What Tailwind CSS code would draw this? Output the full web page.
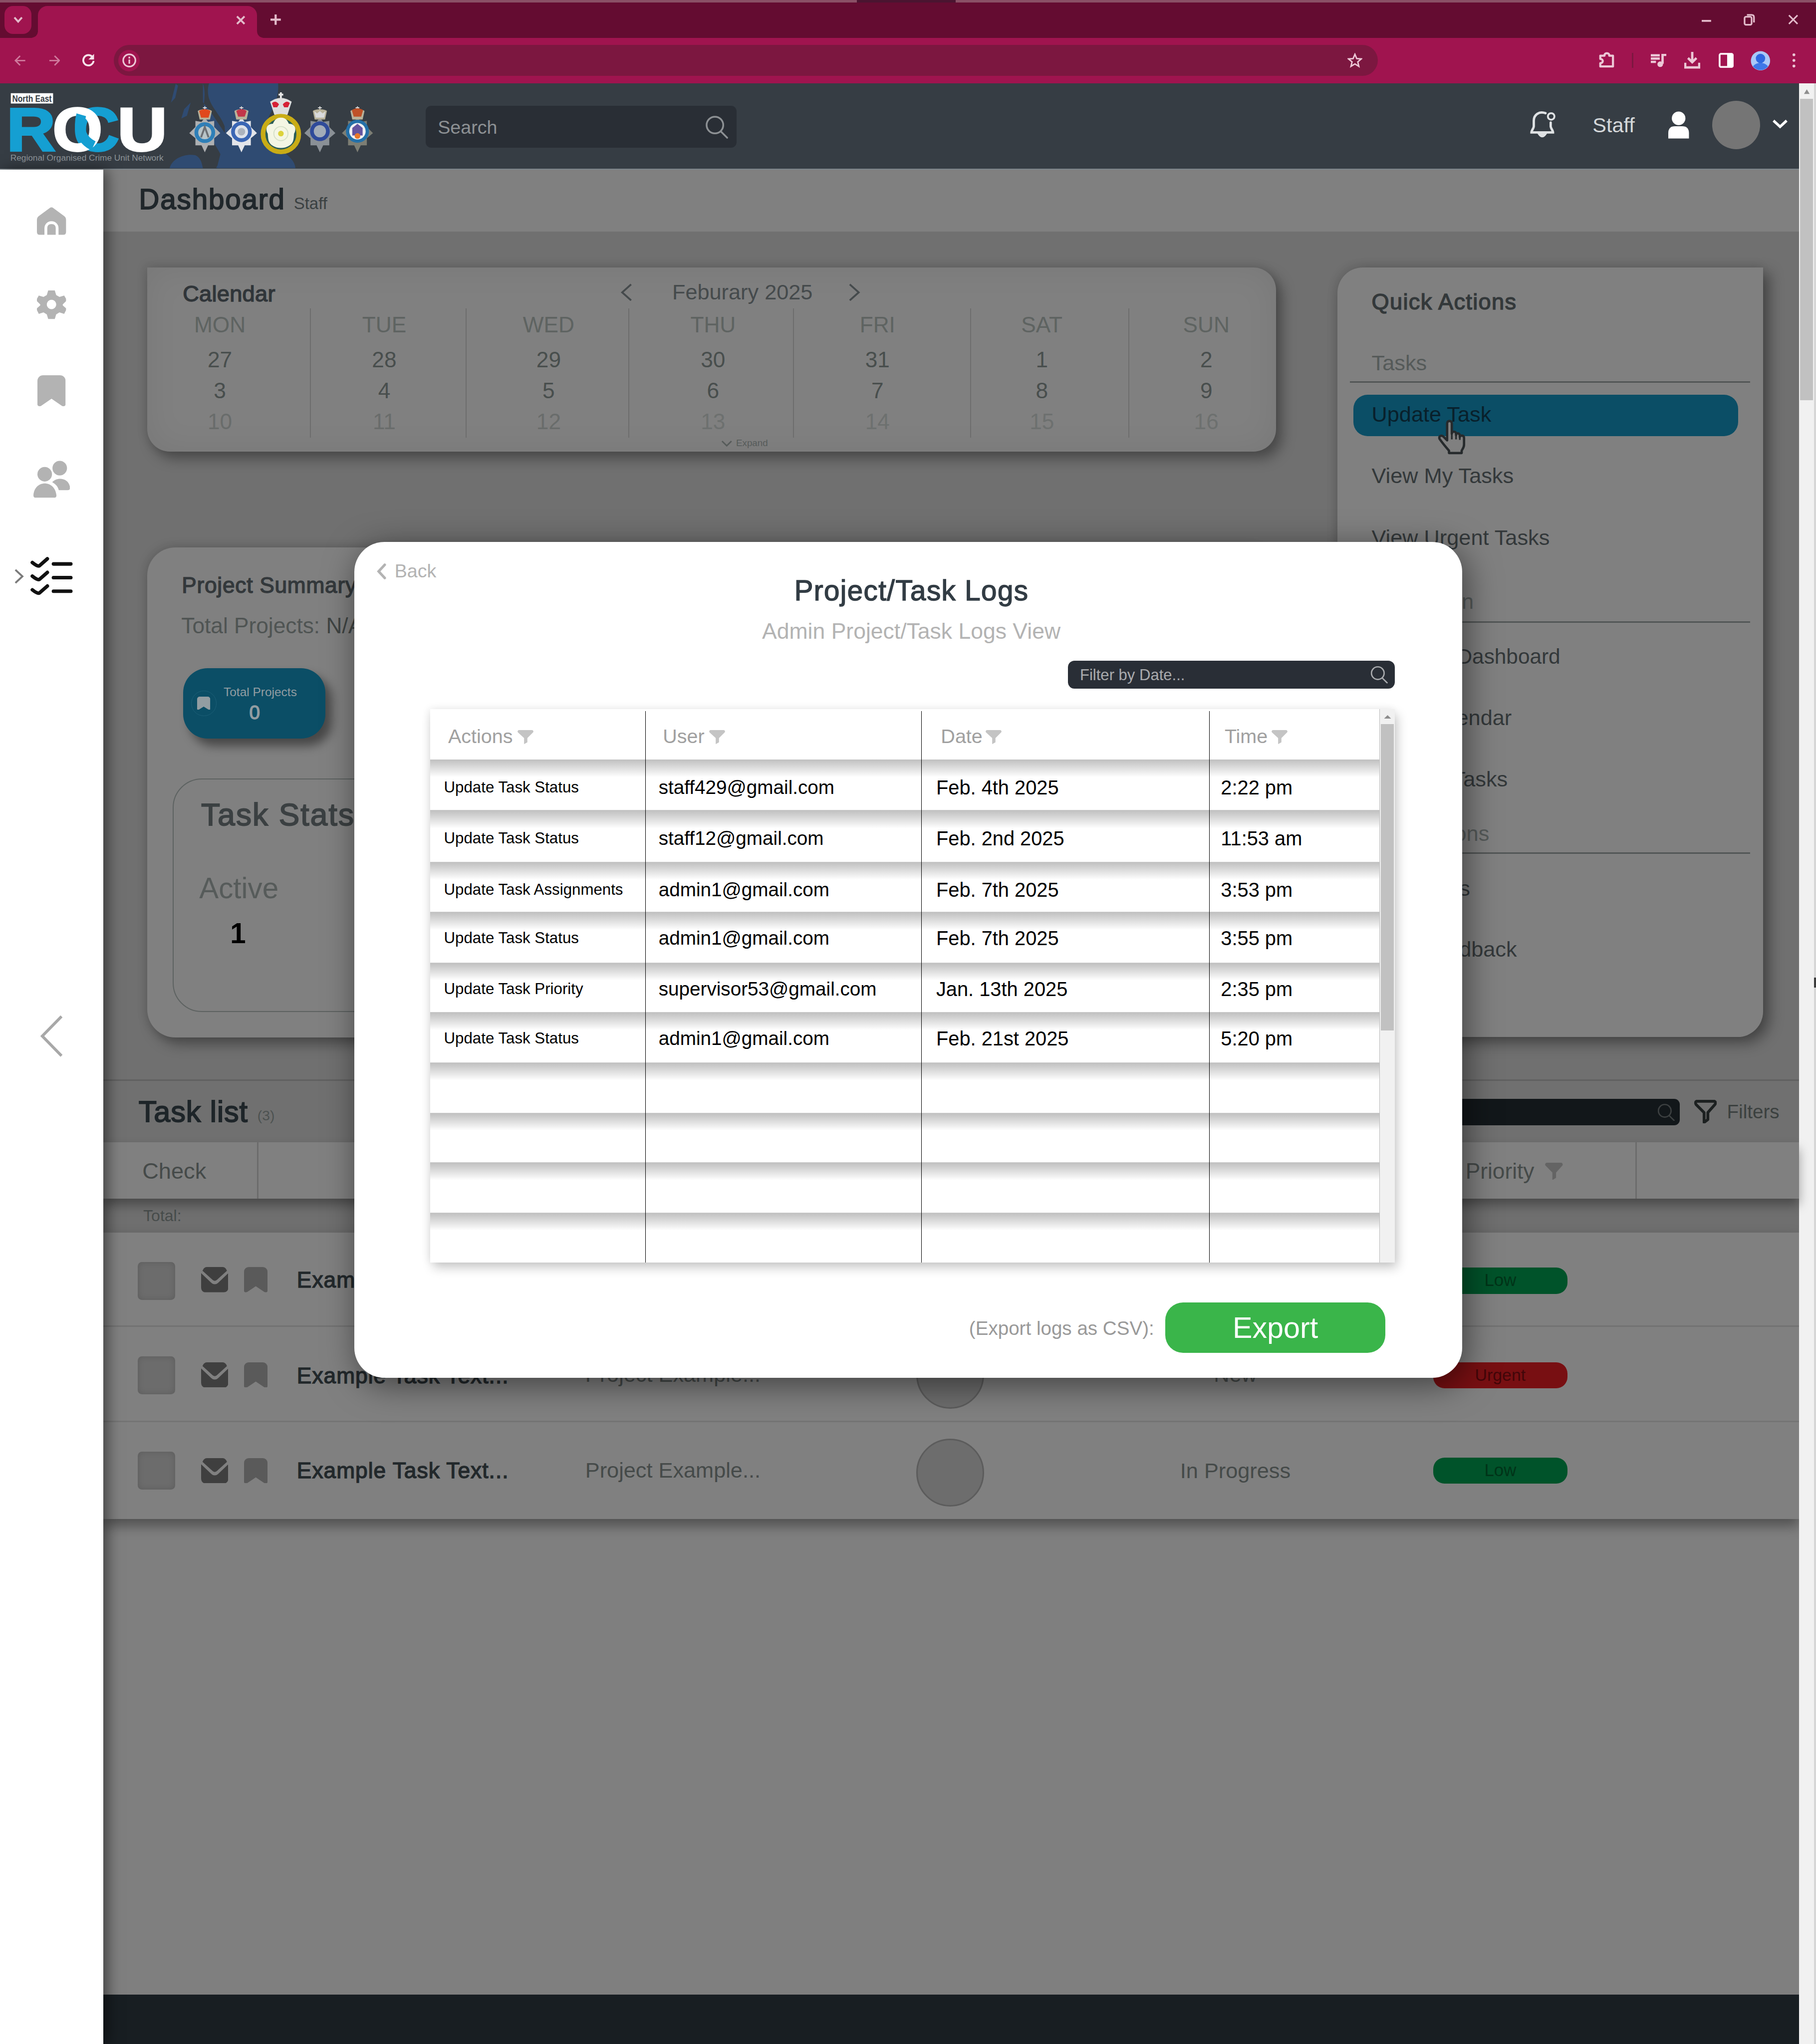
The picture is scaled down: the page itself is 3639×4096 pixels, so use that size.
<!DOCTYPE html>
<html lang="en">
<head>
<meta charset="utf-8">
<title>Project/Task Logs</title>
<script src="https://cdn.jsdelivr.net/npm/@tailwindcss/browser@4"></script>
</head>
<body class="w-[3639px] h-[4096px] overflow-hidden bg-[#808080]">
<svg class="hidden">
  <symbol id="i-funnel" viewBox="0 0 34 30" preserveAspectRatio="none"><path d="M3 0h28a3 3 0 0 1 2 5L21 17v9l-7 4V17L1 5a3 3 0 0 1 2-5z" fill="currentColor"/></symbol>
  <symbol id="i-search" viewBox="0 0 48 48"><circle cx="20" cy="20" r="17" fill="none" stroke="currentColor" stroke-width="3.6"/><path d="M32 33L45 46" stroke="currentColor" stroke-width="3.6" stroke-linecap="round"/></symbol>
  <symbol id="i-bookmark" viewBox="0 0 60 66" preserveAspectRatio="none"><path d="M12 0h36a12 12 0 0 1 12 12v50c0 4-5 5-8 3L30 50 8 65c-3 2-8 1-8-3V12A12 12 0 0 1 12 0z" fill="currentColor"/></symbol>
  <symbol id="i-mail" viewBox="0 0 58 54"><path d="M3 8C5 3 8 0 12 0h34c4 0 7 3 9 8L33 28c-3 2-5 2-8 0z" fill="currentColor"/><path d="M0 13l21 20c5 5 11 5 16 0l21-20v30c0 7-4 11-10 11H10C4 54 0 50 0 43z" fill="currentColor"/></symbol>
  <symbol id="i-badge" viewBox="0 0 70 100"><path d="M35 24l7 9 13-2 0 13 13 13-13 11 0 15-13 0-7 15-7-15-13 0 0-15L2 57l13-13 0-13 13 2z" fill="currentColor"/><path d="M35 0v8M31 3h8" stroke="#d9d9d9" stroke-width="2"/><path d="M20 10c4-5 26-5 30 0l-4 18H24z" fill="#b9b39a"/></symbol>
</svg>

<div class="relative flex flex-col w-[3866px] h-[4352px] overflow-hidden [zoom:0.94128] font-['Liberation_Sans',Arial,sans-serif] text-[#33383b]">

  <!-- Browser tab strip -->
  <div class="h-[5px] shrink-0 flex bg-[#8a5066]"><div class="w-[1824px]"></div><div class="w-[210px] bg-[#4a1430]"></div></div>
  <div class="h-[76px] shrink-0 flex items-end bg-[#640c31] text-[#e3bccb]">
    <div class="ml-[10px] mb-[9px] w-[57px] h-[59px] rounded-[18px] bg-[#a0144f] flex items-center justify-center">
      <svg class="w-[20px] h-[14px]" viewBox="0 0 20 14"><path d="M2 2l8 9 8-9" fill="none" stroke="currentColor" stroke-width="4"/></svg>
    </div>
    <svg class="w-[14px] h-[16px]" viewBox="0 0 14 16"><path d="M14 0v16H0Q14 14 14 0z" fill="#a0144f"/></svg>
    <div class="w-[466px] h-[68px] rounded-t-[20px] bg-[#a0144f] flex items-center justify-end pr-[24px] pb-[8px]">
      <svg class="w-[20px] h-[20px]" viewBox="0 0 20 20"><path d="M2 2l16 16M18 2L2 18" stroke="currentColor" stroke-width="4"/></svg>
    </div>
    <svg class="w-[14px] h-[16px]" viewBox="0 0 14 16"><path d="M0 0v16h14Q0 14 0 0z" fill="#a0144f"/></svg>
    <svg class="ml-[15px] mb-[28px] w-[22px] h-[22px]" viewBox="0 0 22 22"><path d="M11 0v22M0 11h22" stroke="currentColor" stroke-width="4.500"/></svg>
    <div class="grow"></div>
    <svg class="mb-[34px] mr-[69px] w-[20px] h-[6px]" viewBox="0 0 20 6"><path d="M0 3h20" stroke="currentColor" stroke-width="4"/></svg>
    <svg class="mb-[26px] mr-[71px] w-[24px] h-[26px]" viewBox="0 0 24 26"><rect x="2" y="7" width="15" height="17" rx="3" fill="none" stroke="currentColor" stroke-width="3.500"/><path d="M7 3h10q5 0 5 5v11" fill="none" stroke="currentColor" stroke-width="3.500"/></svg>
    <svg class="mb-[27px] mr-[37px] w-[22px] h-[24px]" viewBox="0 0 24 24"><path d="M2 2l20 20M22 2L2 22" stroke="currentColor" stroke-width="3.500"/></svg>
  </div>

  <!-- Browser toolbar -->
  <div class="h-[96px] shrink-0 flex items-center bg-[#a0144f] text-[#ecc8d6]">
    <svg class="ml-[31px] w-[24px] h-[24px] text-[#cf7a9d]" viewBox="0 0 24 24"><path d="M23 12H3M12 2L2 12l10 10" fill="none" stroke="currentColor" stroke-width="3"/></svg>
    <svg class="ml-[49px] w-[24px] h-[24px] text-[#cf7a9d]" viewBox="0 0 24 24"><path d="M1 12h20M12 2l10 10-10 10" fill="none" stroke="currentColor" stroke-width="3"/></svg>
    <svg class="ml-[46px] w-[28px] h-[30px] text-[#f7e4ec]" viewBox="0 0 28 30"><path d="M22 7A11 11 0 1 0 25 16" fill="none" stroke="currentColor" stroke-width="4"/><path d="M26 1v12H14z" fill="currentColor"/></svg>
    <div class="ml-[40px] w-[2691px] h-[66px] rounded-full bg-[#7c1740] flex items-center justify-between pl-[10px] pr-[33px]">
      <div class="size-[46px] rounded-full bg-[#a0144f] flex items-center justify-center">
        <svg class="size-[30px]" viewBox="0 0 30 30"><circle cx="15" cy="15" r="13" fill="none" stroke="currentColor" stroke-width="3.4"/><path d="M15 13v9M15 7v4" stroke="currentColor" stroke-width="3.4"/></svg>
      </div>
      <svg class="size-[32px]" viewBox="0 0 32 32"><path d="M16 3l3.8 9 9.7.8-7.400 6.300 2.300 9.500-8.400-5.100-8.400 5.100 2.300-9.500L2.500 12.800l9.700-.8z" fill="none" stroke="currentColor" stroke-width="3"/></svg>
    </div>
    <svg class="ml-[470px] size-[36px]" viewBox="0 0 36 36"><path d="M4 8h9c-1-7 11-7 10 0h8v23H4v-7c7 0 7-9 0-9z" fill="none" stroke="currentColor" stroke-width="4.500" stroke-linejoin="round"/></svg>
    <div class="ml-[35px] w-[3px] h-[32px] bg-[#7c1740]"></div>
    <svg class="ml-[38px] w-[34px] h-[28px]" viewBox="0 0 34 28"><path d="M0 3h19M0 10h19M0 17h11M25 21V2h8" fill="none" stroke="currentColor" stroke-width="5"/><circle cx="20" cy="22" r="6" fill="currentColor"/></svg>
    <svg class="ml-[37px] w-[34px] h-[36px]" viewBox="0 0 34 36"><path d="M17 0v21M8 13l9 9 9-9M2 23v10h30V23" fill="none" stroke="currentColor" stroke-width="5"/></svg>
    <svg class="ml-[39px] w-[32px] h-[32px]" viewBox="0 0 32 32"><rect x="2" y="2" width="28" height="28" rx="3" fill="none" stroke="#fbeef3" stroke-width="4"/><rect x="18" y="2" width="12" height="28" fill="#fff"/></svg>
    <svg class="ml-[36px] size-[42px]" viewBox="0 0 42 42"><circle cx="21" cy="21" r="20.500" fill="#a9c8f8"/><path d="M5 33c7-10 25-10 32 0a20 20 0 0 1-32 0z" fill="#3f78e8"/><circle cx="21" cy="16" r="10" fill="#2f68e0"/></svg>
    <svg class="ml-[46px] w-[8px] h-[32px]" viewBox="0 0 8 32"><circle cx="4" cy="4" r="3" fill="currentColor"/><circle cx="4" cy="16" r="3" fill="currentColor"/><circle cx="4" cy="28" r="3" fill="currentColor"/></svg>
  </div>

  <div class="flex grow">
    <div class="flex flex-col w-[3830px] h-[4175px]">

      <!-- Site header -->
      <header class="h-[184px] shrink-0 flex items-center bg-[#363d44] border-b-[3px] border-[#7d868c] pr-[24px]">
        <svg class="w-[906px] h-[181px] shrink-0" viewBox="0 177 906 181">
          <path d="M432 177c10 30-5 50 5 90 15 40 40 60 40 90H460c10-15 20-50 28-60l-40-60-16-20z" fill="#2f4b72"/>
          <path d="M445 177H592c4 50-30 70-25 100 10 40 60 50 62 81H462c5-30 20-60 16-90-10-30-45-50-33-91zM361 358c5-20 30-32 55-28 12 6 14 18 16 28z" fill="#2f4b72"/>
          <path d="M374 178l5 4-6 26-9 10zM392 232l14-14-8 28-12 6z" fill="#2f4b72"/>
          <rect x="23" y="198" width="90" height="22" fill="#fff"/>
          <text x="26" y="216" font-size="19" font-weight="700" textLength="84" lengthAdjust="spacingAndGlyphs" fill="#363d44">North East</text>
          <g font-weight="700" font-size="131" stroke-width="4">
            <text x="14" y="320" textLength="104" lengthAdjust="spacingAndGlyphs" fill="#159fd2" stroke="#159fd2">R</text>
            <text x="156" y="320" textLength="98" lengthAdjust="spacingAndGlyphs" fill="#159fd2" stroke="#159fd2">C</text>
            <text x="112" y="320" textLength="106" lengthAdjust="spacingAndGlyphs" fill="#fff" stroke="#fff">O</text>
            <path d="M173 244c-8 28 0 54 26 66" fill="none" stroke="#159fd2" stroke-width="21"/>
            <text x="250" y="320" textLength="106" lengthAdjust="spacingAndGlyphs" fill="#fff" stroke="#fff">U</text>
          </g>
          <text x="22" y="342" font-size="17" textLength="326" lengthAdjust="spacingAndGlyphs" fill="#8d9499">Regional Organised Crime Unit Network</text>
          <g>
            <use href="#i-badge" x="401" y="226" width="70" height="100" color="#aeb0b2"/><circle cx="436" cy="282" r="18" fill="#b8c4c8" stroke="#2e7fb8" stroke-width="8"/><path d="M424 236q12-8 24 0l-4 14h-16z" fill="#e0481c"/><path d="M428 292l8-22 8 22" fill="none" stroke="#6b6f74" stroke-width="4"/>
            <use href="#i-badge" x="479" y="226" width="70" height="100" color="#e3e5e9"/><circle cx="514" cy="280" r="18" fill="#dde2ea" stroke="#3a66b4" stroke-width="8"/><path d="M503 236q11-8 22 0l-4 12h-14z" fill="#c2364a"/><circle cx="514" cy="280" r="8" fill="#aab2bd"/>
            <path d="M598 196v14M593 201h10" stroke="#e8e8e8" stroke-width="4"/><path d="M575 216q23-16 46 0l-9 28h-28z" fill="#dedede"/><path d="M579 219q8-7 15 3l-4 6h-8zM602 222q8-10 15-3l-4 9h-8z" fill="#d62036"/>
            <ellipse cx="598" cy="285" rx="38" ry="38" fill="#2a5d58" stroke="#c9ac16" stroke-width="10"/><path d="M598 250c12 0 14 8 17 13 13 0 17 11 11 21-1 11 0 20-11 26-9 6-25 6-34 0-11-6-10-16-11-26-6-10-2-21 11-21 3-5 5-13 17-13z" fill="#f4f6e4"/><circle cx="598" cy="284" r="6" fill="#dcd23c"/><circle cx="598" cy="284" r="15" fill="none" stroke="#d5e0c8" stroke-width="2"/>
            <use href="#i-badge" x="646" y="226" width="70" height="100" color="#8a9096"/><circle cx="681" cy="279" r="17" fill="#a3acb8" stroke="#2f4a9a" stroke-width="8"/><path d="M669 236l6 5 6-5 6 5 6-5-3 14h-18z" fill="#d8dadc"/>
            <use href="#i-badge" x="726" y="226" width="70" height="100" color="#7d7e74"/><circle cx="761" cy="279" r="21" fill="#f2f0f2" stroke="#2470a8" stroke-width="7"/><path d="M749 234q12-8 24 0l-4 14h-16z" fill="#bf5228"/><path d="M750 272l11-9 11 9v16h-22z" fill="#6454a0"/><circle cx="761" cy="289" r="6" fill="#e8772a"/>
          </g>
        </svg>
        <div class="w-[662px] h-[90px] mt-1 rounded-[12px] bg-[#292e35] flex items-center justify-between pl-[26px] pr-[17px] text-[#8d9194]">
          <span class="text-[40px] leading-none pt-[3px]">Search</span>
          <svg class="size-[50px]"><use href="#i-search"/></svg>
        </div>
        <div class="grow"></div>
        <svg class="w-[56px] h-[58px] mr-[78px] -mt-[4px] text-[#dfe2e4]" viewBox="0 0 56 58"><path d="M34 4C20-1 9 8 9 20v12c0 4-5 9-5 13h46c0-4-5-9-5-13v-8" fill="none" stroke="currentColor" stroke-width="5" stroke-linecap="round"/><circle cx="46" cy="11" r="7" fill="none" stroke="currentColor" stroke-width="4"/><path d="M19 48q8 12 16 0z" fill="currentColor" stroke="currentColor" stroke-width="3"/></svg>
        <span class="text-[44px] leading-none text-[#d5d8da] mr-[72px]">Staff</span>
        <svg class="w-[44px] h-[58px] mr-[49px] -mt-[4px]" viewBox="0 0 44 58"><circle cx="22" cy="15" r="14.500" fill="#fff"/><path d="M0 58V46q0-14 14-14h16q14 0 14 14v12z" fill="#fff"/></svg>
        <div class="w-[102px] h-[103px] rounded-full bg-[#757575] mr-[25px] -mt-[4px]"></div>
        <svg class="w-[34px] h-[22px] -mt-[8px]" viewBox="0 0 34 22"><path d="M3 4l14 13L31 4" fill="none" stroke="#fff" stroke-width="5.500"/></svg>
      </header>

      <div class="flex grow">
        <!-- Sidebar -->
        <nav class="relative z-10 w-[220px] shrink-0 flex flex-col items-center bg-white text-[#b3b3b3] pt-[80px] shadow-[8px_0_28px_rgba(0,0,0,0.5)]">
          <svg class="w-[62px] h-[59px]" viewBox="0 0 62 59"><path d="M27 2q4-3 8 0l23 17q4 3 4 8v26q0 6-6 6H46V45a15 15 0 0 0-30 0v14H6q-6 0-6-6V27q0-5 4-8z" fill="currentColor"/><path d="M22 59V45q0-9 9-9t9 9v14z" fill="currentColor"/></svg>
          <svg class="mt-[116px] w-[62px] h-[64px]" viewBox="0 0 62 64"><path fill-rule="evenodd" d="M24 2h14l3 10 7 4 10-3 4 7 0 5-7 7 0 2 7 6 0 4-4 8-10-3-7 4-3 10H24l-3-10-7-4-10 3-4-8 0-4 7-6 0-2-7-7 0-5 4-7 10 3 7-4zM31 22a10 10 0 1 0 .1 0z" fill="currentColor"/></svg>
          <svg class="mt-[119px] w-[60px] h-[66px]"><use href="#i-bookmark"/></svg>
          <svg class="mt-[116px] w-[78px] h-[80px]" viewBox="0 0 78 80"><circle cx="24" cy="29" r="15.500" fill="currentColor"/><circle cx="56" cy="16" r="15.500" fill="currentColor"/><path d="M0 74c2-34 46-34 49 0q0 5-5 5H5q-5 0-5-5zM40 46c10-12 36-10 38 12q0 5-5 5H54c-2-8-7-13-14-17z" fill="currentColor"/></svg>
          <div class="self-stretch flex items-center pl-[31px] mt-[125px]">
            <svg class="w-[20px] h-[34px]" viewBox="0 0 20 34"><path d="M2 3l15 14L2 31" fill="none" stroke="#7a7a7a" stroke-width="4"/></svg>
            <svg class="ml-[14px] w-[90px] h-[82px] text-[#111]" viewBox="0 0 90 82"><g fill="none" stroke="currentColor" stroke-width="7.500" stroke-linecap="round" stroke-linejoin="round"><path d="M4 12q11 9 15 7L36 4M4 41q11 9 15 7L36 33M4 70q11 9 15 7L36 62M49 15h37M49 44h37M49 73h37"/></g></svg>
          </div>
          <svg class="mt-[892px] w-[50px] h-[92px]" viewBox="0 0 50 92"><path d="M46 4L5 46l41 42" fill="none" stroke="#a8a8a8" stroke-width="6"/></svg>
        </nav>

        <main class="w-[3610px] flex flex-col bg-[#7f7f7f]">
          <div class="h-[132px] shrink-0 flex items-baseline pl-[76px] pt-[27px] bg-[#808080]">
            <h1 class="text-[60px] leading-[74px] tracking-[2px] text-[#20272b] [-webkit-text-stroke:2px_currentColor]">Dashboard</h1>
            <span class="ml-[18px] text-[35px] text-[#3a4042]">Staff</span>
          </div>

          <div class="h-[1805px] shrink-0 flex items-start justify-between bg-[#707070] pt-[77px] pl-[93px] pr-[77px]">
            <div class="flex flex-col gap-[204px]">
              <!-- Calendar -->
              <section class="relative w-[2404px] h-[391px] rounded-[48px] rounded-tl-none bg-[#808080] shadow-[12px_14px_28px_rgba(0,0,0,0.35),-4px_-4px_20px_rgba(0,0,0,0.1),inset_0_0_70px_rgba(0,0,0,0.07)]">
                <div class="absolute left-0 top-[87px] flex h-[275px]">
                  <div class="w-[349px] border-r-[3px] border-[#6d6d6d]"></div><div class="w-[331px] border-r-[3px] border-[#6d6d6d]"></div><div class="w-[347px] border-r-[3px] border-[#6d6d6d]"></div><div class="w-[350px] border-r-[3px] border-[#6d6d6d]"></div><div class="w-[377px] border-r-[3px] border-[#6d6d6d]"></div><div class="w-[337px] border-r-[3px] border-[#6d6d6d]"></div>
                </div>
                <div class="relative h-[90px] flex items-center text-[46px] leading-none text-[#454a4c] pt-[14px]">
                  <h2 class="w-[932px] pl-[76px] pt-[6px] text-[48px] tracking-[0.300px] text-[#303539] [-webkit-text-stroke:1.500px_currentColor]">Calendar</h2>
                  <div class="flex items-center">
                    <svg class="ml-[76px] w-[26px] h-[38px]" viewBox="0 0 26 38"><path d="M23 2L4 19l19 17" fill="none" stroke="currentColor" stroke-width="4"/></svg>
                    <span class="ml-[84px]">Feburary 2025</span>
                    <svg class="ml-[76px] w-[26px] h-[38px]" viewBox="0 0 26 38"><path d="M3 2l19 17L3 36" fill="none" stroke="currentColor" stroke-width="4"/></svg>
                  </div>
                </div>
                <div class="relative -ml-[20px] w-[2450px] grid grid-cols-7 text-center text-[47px] leading-[64px]">
                  <span class="text-[#5e6361]">MON</span><span class="text-[#5e6361]">TUE</span><span class="text-[#5e6361]">WED</span><span class="text-[#5e6361]">THU</span><span class="text-[#5e6361]">FRI</span><span class="text-[#5e6361]">SAT</span><span class="text-[#5e6361]">SUN</span>
                </div>
                <div class="relative -ml-[20px] mt-[9px] w-[2450px] grid grid-cols-7 text-center text-[47px] leading-[66px] text-[#484e4d]">
                  <span>27</span><span>28</span><span>29</span><span>30</span><span>31</span><span>1</span><span>2</span>
                  <span>3</span><span>4</span><span>5</span><span>6</span><span>7</span><span>8</span><span>9</span>
                  <span class="text-[#696c6b]">10</span><span class="text-[#696c6b]">11</span><span class="text-[#696c6b]">12</span><span class="text-[#6d706f]">13</span><span class="text-[#6d706f]">14</span><span class="text-[#6d706f]">15</span><span class="text-[#6d706f]">16</span>
                </div>
                <div class="absolute left-[1222px] top-[364px] flex items-center text-[20px] leading-none text-[#565b5a]">
                  <svg class="w-[24px] h-[14px] mr-[8px]" viewBox="0 0 24 14"><path d="M2 2l10 10L22 2" fill="none" stroke="currentColor" stroke-width="3"/></svg>Expand
                </div>
              </section>

              <!-- Project summary -->
              <section class="w-[2404px] h-[1044px] rounded-[60px] bg-[#808080] pl-[55px] pt-[56px] shadow-[12px_14px_28px_rgba(0,0,0,0.35),-4px_-4px_20px_rgba(0,0,0,0.1)]">
                <h2 class="pl-[19px] text-[47px] leading-[50px] tracking-[0.800px] [-webkit-text-stroke:1.500px_currentColor]">Project Summary</h2>
                <p class="pl-[18px] mt-[36px] text-[47px] leading-[50px] text-[#4f5453]">Total Projects: <span class="text-[#3f4443]">N/A</span></p>
                <div class="ml-[22px] mt-[66px] w-[303px] h-[149px] rounded-[52px] bg-[#0b4e66] flex items-center pl-[17px] text-[#929da2] shadow-[14px_16px_22px_rgba(0,0,0,0.45)]">
                  <div class="size-[54px] rounded-full border border-[#1c5f77] flex items-center justify-center"><svg class="w-[28px] h-[28px]"><use href="#i-bookmark"/></svg></div>
                  <div class="ml-[14px] flex flex-col items-center w-[158px] text-[26px] leading-[30px] pt-[3px]"><span class="whitespace-nowrap">Total Projects</span><span class="mt-[6px] -ml-[24px] text-[41px] leading-[44px] [-webkit-text-stroke:1.500px_currentColor]">0</span></div>
                </div>
                <div class="mt-[85px] w-[2270px] h-[498px] rounded-[62px] border-[3px] border-[#5d6261] pt-[38px] pl-[58px]">
                  <h3 class="text-[66px] leading-[76px] tracking-[2.300px] [-webkit-text-stroke:2px_currentColor] text-[#3b4042]">Task Stats</h3>
                  <div class="-ml-[4px] mt-[80px] w-[172px] flex flex-col text-[62px] leading-[76px] text-[#565b5a]">Active<span class="mt-[20px] ml-[66px] font-bold text-[60px] leading-[76px] text-black">1</span></div>
                </div>
              </section>
            </div>

            <!-- Quick actions -->
            <aside class="w-[906px] h-[1638px] rounded-[54px] rounded-tr-none bg-[#808080] px-[27px] pt-[43px] text-[46px] leading-[60px] text-[#33383a] shadow-[12px_12px_30px_rgba(0,0,0,0.4),-4px_-4px_20px_rgba(0,0,0,0.08)]">
              <h2 class="pl-[46px] text-[48px] tracking-[1.400px] [-webkit-text-stroke:1.500px_currentColor]">Quick Actions</h2>
              <div class="mt-[70px] h-[72px] pl-[46px] text-[46px] text-[#555a59] border-b-4 border-[#525656]">Tasks</div>
              <div class="relative mt-[25px] ml-[7px] w-[819px] h-[89px] rounded-[30px] bg-[#0b4e66] pl-[39px] leading-[84px] text-[#08202b]">Update Task
                <svg class="absolute left-[180px] top-[54px] w-[60px] h-[74px]" viewBox="0 0 60 74"><path d="M20 44V8c0-7 10-7 10 0v22c0-6 9-6 9 0v3c0-6 8-5 8 1v3c1-5 9-4 9 2v14c0 6-3 9-5 13v5H24v-5C17 58 9 48 4 41c-3-6 4-9 8-5z" fill="#808080" stroke="#262a2c" stroke-width="5" stroke-linejoin="round"/><path d="M30 30v12M39 33v9M47 36v7" stroke="#262a2c" stroke-width="3.500"/></svg>
              </div>
              <div class="pl-[46px] mt-[54px]">View My Tasks</div>
              <div class="pl-[46px] mt-[71px]">View Urgent Tasks</div>
              <div class="mt-[77px] h-[75px] pl-[46px] text-[#555a59] border-b-4 border-[#525656]">Navigation</div>
              <div class="pl-[46px] mt-[42px] text-[45px]">View My Dashboard</div>
              <div class="pl-[46px] mt-[70px]">View Calendar</div>
              <div class="pl-[46px] mt-[71px]">View All Tasks</div>
              <div class="mt-[56px] h-[73px] pl-[46px] text-[#555a59] border-b-4 border-[#525656]">Notifications</div>
              <div class="pl-[46px] mt-[43px]">Messages</div>
              <div class="pl-[46px] mt-[70px]">Give Feedback</div>
            </aside>
          </div>

          <!-- Task list -->
          <div class="h-[134px] shrink-0 flex items-center bg-[#707070] border-t-4 border-[#606060] pl-[75px] pr-[42px]">
            <h2 class="text-[63px] leading-none tracking-[1px] text-[#1e2529] [-webkit-text-stroke:2px_currentColor]">Task list</h2>
            <span class="ml-[20px] mt-[16px] text-[30px] text-[#4d5251]">(3)</span>
            <div class="grow"></div>
            <div class="w-[700px] h-[57px] mt-[2px] rounded-[12px] bg-[#12171a] flex items-center justify-end pr-[10px] text-[#3c4041]"><svg class="size-[38px]"><use href="#i-search"/></svg></div>
            <svg class="ml-[30px] w-[48px] h-[50px]" viewBox="0 0 48 50"><path d="M5 3h38q4 2 1 7L29 27v15l-8 6V27L4 10Q1 5 5 3z" fill="none" stroke="#1c2020" stroke-width="6" stroke-linejoin="round"/></svg>
            <span class="ml-[22px] text-[41px] text-[#3b403f]">Filters</span>
          </div>
          <div class="relative h-[120px] shrink-0 flex items-center bg-[#808080] text-[47px] leading-none text-[#454a49] shadow-[0_14px_22px_rgba(0,0,0,0.35)]">
            <div class="w-[330px] h-full border-r-[4px] border-[#6c6c6c] pl-[83px] pt-[3px] flex items-center text-[48px]">Check</div>
            <div class="w-[2935px] h-full border-r-[4px] border-[#6c6c6c] pl-[2570px] pt-[3px] flex items-center">Priority<svg class="ml-[23px] w-[38px] h-[37px] text-[#646464]"><use href="#i-funnel"/></svg></div>
          </div>
          <div class="h-[72px] shrink-0 bg-[#6f6f6f] pl-[85px] text-[34px] leading-[74px] text-[#474c4b]">Total:</div>

          <div class="shrink-0 flex flex-col bg-[#808080] text-[46px] leading-none text-[#454a49] shadow-[0_14px_26px_rgba(0,0,0,0.38)]">
            <div class="h-[201px] flex items-center border-b-4 border-[#727272]">
              <div class="ml-[73px] w-[80px] h-[81px] mt-[8px] rounded-[9px] bg-[#6c6c6c] shadow-[inset_0_0_14px_rgba(0,0,0,0.15)]"></div>
              <svg class="ml-[55px] mt-1 w-[58px] h-[54px] text-[#3f3f3f]"><use href="#i-mail"/></svg>
              <svg class="ml-[34px] mt-1 w-[50px] h-[54px] text-[#5a5a5a]"><use href="#i-bookmark"/></svg>
              <span class="ml-[62px] w-[614px] mt-[4px] text-[47px] tracking-[1.100px] text-[#22282b] [-webkit-text-stroke:1.500px_currentColor]">Example Task Text...</span>
              <span class="w-[705px]">Project Example...</span>
              <span class="size-[144px] rounded-full bg-[#6d6d6d] border-4 border-[#5c5c5c]"></span>
              <span class="w-[1070px] text-center">New</span>
              <span class="-ml-[114px] w-[286px] h-[56px] mt-[8px] rounded-[24px] bg-[#00532a] text-[#003318] text-[37px] leading-[54px] text-center">Low</span>
            </div>
            <div class="h-[203px] flex items-center border-b-4 border-[#747474]">
              <div class="ml-[73px] w-[80px] h-[81px] mt-[6px] rounded-[9px] bg-[#6c6c6c] shadow-[inset_0_0_14px_rgba(0,0,0,0.15)]"></div>
              <svg class="ml-[55px] mt-1 w-[58px] h-[54px] text-[#3f3f3f]"><use href="#i-mail"/></svg>
              <svg class="ml-[34px] mt-1 w-[50px] h-[54px] text-[#5a5a5a]"><use href="#i-bookmark"/></svg>
              <span class="ml-[62px] w-[614px] mt-[8px] text-[47px] tracking-[1.100px] text-[#22282b] [-webkit-text-stroke:1.500px_currentColor]">Example Task Text...</span>
              <span class="w-[705px] mt-[4px]">Project Example...</span>
              <span class="size-[144px] mt-[4px] rounded-full bg-[#6d6d6d] border-4 border-[#5c5c5c]"></span>
              <span class="w-[1070px] mt-[4px] text-center">New</span>
              <span class="-ml-[114px] w-[286px] h-[56px] mt-[6px] rounded-[24px] bg-[#780f12] text-[#420609] text-[36px] leading-[54px] text-center">Urgent</span>
            </div>
            <div class="h-[206px] flex items-center">
              <div class="ml-[73px] w-[80px] h-[81px] rounded-[9px] bg-[#6c6c6c] shadow-[inset_0_0_14px_rgba(0,0,0,0.15)]"></div>
              <svg class="ml-[55px] w-[58px] h-[54px] text-[#3f3f3f]"><use href="#i-mail"/></svg>
              <svg class="ml-[34px] w-[50px] h-[54px] text-[#5a5a5a]"><use href="#i-bookmark"/></svg>
              <span class="ml-[62px] w-[614px] text-[47px] tracking-[1.100px] text-[#22282b] [-webkit-text-stroke:1.500px_currentColor]">Example Task Text...</span>
              <span class="w-[705px]">Project Example...</span>
              <span class="size-[144px] mt-[8px] rounded-full bg-[#6d6d6d] border-4 border-[#5c5c5c]"></span>
              <span class="w-[1070px] mt-[2px] text-center">In Progress</span>
              <span class="-ml-[114px] w-[286px] h-[56px] rounded-[24px] bg-[#00532a] text-[#003318] text-[37px] leading-[54px] text-center">Low</span>
            </div>
          </div>
          <div class="grow"></div>
          <footer class="h-[106px] shrink-0 bg-[#181e22]"></footer>
        </main>
      </div>
    </div>

    <!-- Page scrollbar -->
    <div class="w-[32px] h-[4175px] bg-[#f1f1f1] flex flex-col items-center">
      <svg class="mt-[12px] w-[14px] h-[12px]" viewBox="0 0 14 12"><path d="M7 1l6 10H1z" fill="#8d8d8d"/></svg>
      <div class="mt-[9px] w-[28px] h-[642px] bg-[#c1c1c1]"></div>
    </div>
    <div class="w-[4px] h-[4175px] bg-[#d6d6d6] pt-[1904px]"><div class="h-[22px] bg-[#3c3c3c]"></div></div>
  </div>

  <!-- Logs dialog -->
  <div class="absolute z-20 left-[754px] top-[1154px] w-[2359px] h-[1779px] rounded-[64px] bg-white flex flex-col shadow-[8px_14px_70px_rgba(0,0,0,0.5)]">
    <div class="ml-[48px] mt-[42px] h-[40px] flex items-center gap-[18px] text-[40px] leading-none text-[#b3b3b3]">
      <svg class="w-[20px] h-[34px]" viewBox="0 0 20 34"><path d="M17 3L4 17l13 14" fill="none" stroke="currentColor" stroke-width="5.500" stroke-linecap="round"/></svg>Back
    </div>
    <h2 class="-mt-[13px] pl-[14px] text-center text-[60px] leading-[70px] tracking-[1.500px] text-[#323c44] [-webkit-text-stroke:1.500px_currentColor]">Project/Task Logs</h2>
    <p class="mt-[23px] pl-[13px] text-center text-[47.300px] leading-[56px] text-[#b3b3b3]">Admin Project/Task Logs View</p>
    <div class="ml-[1520px] mt-[35px] w-[695px] h-[59px] rounded-[14px] bg-[#292e36] flex items-center justify-between pl-[25px] pr-[14px] text-[33px] leading-none text-[#a9abae]">Filter by Date...<svg class="size-[38px]"><use href="#i-search"/></svg></div>

    <div class="ml-[162px] mt-[44px] w-[2053px] h-[1178px] shrink-0 flex shadow-[6px_12px_22px_rgba(0,0,0,0.22),-4px_-2px_16px_rgba(0,0,0,0.06)]">
      <div class="relative w-[2022px] flex flex-col text-[42.300px] text-black border-r border-[#bbb]">
        <div class="absolute inset-x-0 top-[4px] bottom-0 z-10 flex"><div class="w-[459px] border-r border-black"></div><div class="w-[587px] border-r border-black"></div><div class="w-[613px] border-r border-black"></div></div>
        <div class="h-[107px] grid grid-cols-[459px_587px_613px_1fr] leading-[111px] text-[42px] text-[#a0a0a0] pt-[2px]">
          <div class="pl-[38px] flex items-center">Actions<svg class="ml-[10px] mt-[4px] w-[34px] h-[30px] text-[#c4c4c4]"><use href="#i-funnel"/></svg></div>
          <div class="pl-[36px] flex items-center">User<svg class="ml-[10px] mt-[4px] w-[34px] h-[30px] text-[#c4c4c4]"><use href="#i-funnel"/></svg></div>
          <div class="pl-[41px] flex items-center">Date<svg class="ml-[7px] mt-[4px] w-[34px] h-[30px] text-[#c4c4c4]"><use href="#i-funnel"/></svg></div>
          <div class="pl-[32px] flex items-center">Time<svg class="ml-[8px] mt-[4px] w-[34px] h-[30px] text-[#c4c4c4]"><use href="#i-funnel"/></svg></div>
        </div>
        <div class="h-[108px] grid grid-cols-[459px_587px_613px_1fr] leading-[119px] bg-linear-to-b from-[#c0c0c0] via-white via-35% to-white border-b border-[#ccc]"><span class="pl-[29px] text-[33.200px]">Update Task Status</span><span class="pl-[27px] text-[41.100px]">staff429@gmail.com</span><span class="pl-[31px]">Feb. 4th 2025</span><span class="pl-[24px]">2:22 pm</span></div>
        <div class="h-[111px] grid grid-cols-[459px_587px_613px_1fr] leading-[119px] bg-linear-to-b from-[#c0c0c0] via-white via-35% to-white border-b border-[#ccc]"><span class="pl-[29px] text-[33.200px]">Update Task Status</span><span class="pl-[27px] text-[41.100px]">staff12@gmail.com</span><span class="pl-[31px]">Feb. 2nd 2025</span><span class="pl-[24px]">11:53 am</span></div>
        <div class="h-[106px] grid grid-cols-[459px_587px_613px_1fr] leading-[117px] bg-linear-to-b from-[#c0c0c0] via-white via-35% to-white border-b border-[#ccc]"><span class="pl-[29px] text-[33.200px]">Update Task Assignments</span><span class="pl-[27px] text-[41.100px]">admin1@gmail.com</span><span class="pl-[31px]">Feb. 7th 2025</span><span class="pl-[24px]">3:53 pm</span></div>
        <div class="h-[108px] grid grid-cols-[459px_587px_613px_1fr] leading-[111px] bg-linear-to-b from-[#c0c0c0] via-white via-35% to-white border-b border-[#ccc]"><span class="pl-[29px] text-[33.200px]">Update Task Status</span><span class="pl-[27px] text-[41.100px]">admin1@gmail.com</span><span class="pl-[31px]">Feb. 7th 2025</span><span class="pl-[24px]">3:55 pm</span></div>
        <div class="h-[106px] grid grid-cols-[459px_587px_613px_1fr] leading-[111px] bg-linear-to-b from-[#c0c0c0] via-white via-35% to-white border-b border-[#ccc]"><span class="pl-[29px] text-[33.200px]">Update Task Priority</span><span class="pl-[27px] text-[41.100px]">supervisor53@gmail.com</span><span class="pl-[31px]">Jan. 13th 2025</span><span class="pl-[24px]">2:35 pm</span></div>
        <div class="h-[107px] grid grid-cols-[459px_587px_613px_1fr] leading-[111px] bg-linear-to-b from-[#c0c0c0] via-white via-35% to-white border-b border-[#ccc]"><span class="pl-[29px] text-[33.200px]">Update Task Status</span><span class="pl-[27px] text-[41.100px]">admin1@gmail.com</span><span class="pl-[31px]">Feb. 21st 2025</span><span class="pl-[24px]">5:20 pm</span></div>
        <div class="h-[107px] bg-linear-to-b from-[#c0c0c0] via-white via-35% to-white border-b border-[#ccc]"></div>
        <div class="h-[106px] bg-linear-to-b from-[#c0c0c0] via-white via-35% to-white border-b border-[#ccc]"></div>
        <div class="h-[107px] bg-linear-to-b from-[#c0c0c0] via-white via-35% to-white border-b border-[#ccc]"></div>
        <div class="h-[105px] bg-linear-to-b from-[#c0c0c0] via-white via-35% to-white"></div>
      </div>
      <div class="w-[31px] bg-[#f1f1f1] flex flex-col items-center">
        <svg class="mt-[12px] w-[16px] h-[8px]" viewBox="0 0 16 8"><path d="M8 0l8 8H0z" fill="#8d8d8d"/></svg>
        <div class="mt-[12px] w-[27px] h-[652px] bg-[#c1c1c1]"></div>
      </div>
    </div>

    <div class="mt-[85px] pr-[164px] flex items-center justify-end">
      <span class="text-[41px] leading-none text-[#999] mr-[24px] pt-[3px]">(Export logs as CSV):</span>
      <button class="w-[468px] h-[107px] rounded-[38px] bg-[#3ab54a] text-white text-[63px] leading-none">Export</button>
    </div>
  </div>
</div>
</body>
</html>
